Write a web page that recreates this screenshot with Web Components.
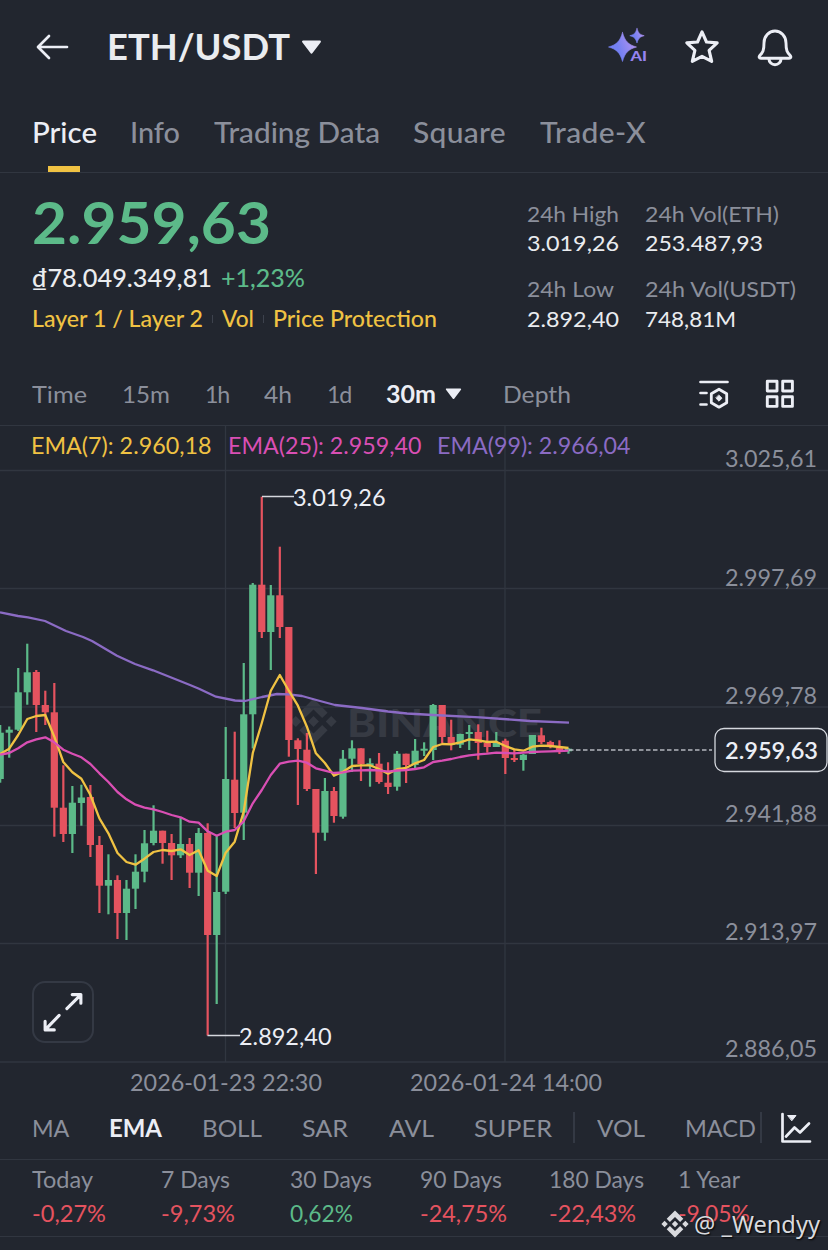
<!DOCTYPE html>
<html lang="en">
<head>
<meta charset="utf-8">
<title>ETH/USDT</title>
<style>
    html {
        background: #22262f;
    }

    body {
        margin: 0;
        width: 828px;
        height: 1250px;
        overflow: hidden;
        font-family: Lato, "Open Sans", sans-serif;
        color: #eaecef;
        --bg: #22262f;
        --line: #313640;
        --muted: #8b8f9b;
        --white: #eceef5;
        --up: #5cba89;
        --down: #e5535f;
        --gold: #f0c243;
        --pink: #d94fb4;
        --purple: #8b6bc4;
    }
</style>
</head>
<body>
<market-page></market-page>

<script>
    // base class: clones the given markup in an open shadow root
    class UiElement extends HTMLElement {
        constructor() {
            super();
            this.attachShadow({ mode: 'open' });
            this.shadowRoot.innerHTML = this.constructor.markup;
        }
    }

    // one line of text, widened and spaced to fill its width
    customElements.define('fit-text', class extends UiElement {
        static get markup() {
            return `
                <style>
                    :host { display: inline-block; white-space: nowrap; flex: none; }
                    span { display: inline-block; transform-origin: 0 50%; }
                </style>
                <span><slot></slot></span>`;
        }
        connectedCallback() {
            const width = Number(this.getAttribute('w'));
            const span = this.shadowRoot.querySelector('span');
            const length = this.textContent.length;
            if (!width || !length) {
                return;
            }
            this.style.width = width + 'px';
            const natural = span.getBoundingClientRect().width;
            const scale = Math.max(0.97, Math.min(1.07, width / natural));
            const spacing = (width / scale - natural) / length;
            span.style.letterSpacing = spacing.toFixed(3) + 'px';
            span.style.transform = `scaleX(${scale.toFixed(4)})`;
        }
    });

    const ICONS = {
        back: [34, 28, '<path d="M14 3 3 14l11 11M3.500 14H32" stroke-width="2.700"/>'],
        caret: [20, 14, '<path d="M2 1.500h16L10 12Z" fill="currentColor" stroke-width="2"/>'],
        ai: [44, 40, `
            <defs>
                <linearGradient id="g" x1="0" y1=".7" x2="1" y2=".3">
                    <stop offset=".35" stop-color="#7480f2"/><stop offset="1" stop-color="#b795f0"/>
                </linearGradient>
            </defs>
            <path d="M15.500 5.500c2.500 8.700 5.500 12 14 14.500-8.500 2.500-11.500 5.800-14 14.500C13 25.800 10 22.500 1.500 20 10 17.500 13 14.200 15.500 5.500Z" fill="url(#g)" stroke="url(#g)" stroke-width=".6"/>
            <path d="M30 1.500c1.400 4.700 2.800 6 7.200 7.200-4.400 1.200-5.800 2.600-7.200 7.300-1.400-4.700-2.800-6.100-7.200-7.300 4.400-1.200 5.800-2.500 7.200-7.200Z" fill="url(#g)" stroke="url(#g)" stroke-width=".6"/>
            <text x="23.500" y="34" font-size="14" font-weight="900" textLength="16.500" lengthAdjust="spacingAndGlyphs" fill="#9683ef" stroke="#22262f" stroke-width="2.500" paint-order="stroke">AI</text>
            <text x="23.500" y="34" font-size="14" font-weight="900" textLength="16.500" lengthAdjust="spacingAndGlyphs" fill="none" stroke="#9683ef" stroke-width=".5" aria-hidden="true"></text>`],
        star: [38, 38, '<path d="m19 3.800 4.500 10.200 10.700.9-8.100 7.500 2.600 11-9.700-5-9.700 5 2.600-11-8.100-7.500 10.700-.9Z" stroke-width="3.100"/>'],
        bell: [38, 40, '<path d="M8 16a11 12 0 0 1 22 0c0 7.800 1.200 9.500 4.200 12.500 1.200 1.400.6 2.700-1 2.700H4.800c-1.600 0-2.200-1.300-1-2.700C6.800 25.500 8 23.800 8 16Z" stroke-width="2.900"/><path d="M13 32a6 5.700 0 0 0 12 0" stroke-width="3"/>'],
        settings: [32, 32, '<path d="M2.500 4h27M2.500 15h6M2.500 26.500h6" stroke-width="2.700"/><path d="m21 11.200 7.700 4.500v9L21 29.200l-7.700-4.500v-9Z" stroke-width="2.800"/><path d="m21 17.200 3 3-3 3-3-3Z" fill="currentColor" stroke-width=".9"/>'],
        grid: [32, 32, '<path d="M3.300 3.300h9.700v9.700H3.300ZM18.700 3.300h9.700v9.700h-9.700ZM3.300 18.700h9.700v9.700H3.300ZM18.700 18.700h9.700v9.700h-9.700Z" stroke-width="2.900"/>'],
        plot: [32, 32, '<path d="M2.500 2v27.500H30M6 24.500l8.500-9 5.500 5 9-9" stroke-width="2.700"/><path d="M8 3.500h8l-4 5Z" fill="currentColor" stroke-width="1"/>'],
        expand: [60, 60, '<path d="M34 26.500 48 12.500M39.500 12H48.500V21M26 33.500 12 48M11.500 39.500V48.500H21" stroke-width="3.200"/>'],
        diamond: [30, 30, '<g fill="currentColor" stroke="none"><path d="m15 1.500 8.300 8.300-3.200 3.200L15 7.900 9.900 13 6.700 9.800Z"/><path d="m15 28.500 8.300-8.300-3.200-3.200-5.100 5.100L9.900 17l-3.200 3.200Z"/><path d="m15 11.800 3.200 3.200-3.200 3.200-3.200-3.200Z"/><path d="m4.600 11.800 3.200 3.200-3.200 3.200L1.400 15ZM25.400 11.800l3.200 3.200-3.200 3.200-3.200-3.200Z"/></g>']
    };

    customElements.define('ui-icon', class extends UiElement {
        static get markup() {
            return `
                <style>
                    :host { display: inline-block; flex: none; color: var(--white); }
                    svg { display: block; }
                </style>
                <div></div>`;
        }
        connectedCallback() {
            const [w, h, body] = ICONS[this.getAttribute('name')];
            const width = this.getAttribute('width') || w;
            this.shadowRoot.querySelector('div').innerHTML =
                `<svg width="${width}" height="${width * h / w}" viewBox="0 0 ${w} ${h}" fill="none" stroke="currentColor"
                    stroke-linecap="round" stroke-linejoin="round">${body}</svg>`;
        }
    });

    customElements.define('pair-header', class extends UiElement {
        static get markup() {
            return `
                <style>
                    :host { display: flex; align-items: center; height: 94px; box-sizing: border-box; padding: 0 34px 0 35px; }
                    fit-text { margin: -3px 0 0 38px; font-size: 36px; font-weight: 700; line-height: 44px; }
                    .caret { margin-left: 11px; }
                    .actions { display: flex; align-items: center; margin-left: auto; gap: 35px; }
                    .actions ui-icon:first-child { margin-right: -3px; }
                </style>
                <ui-icon name="back"></ui-icon>
                <fit-text w="183"></fit-text>
                <ui-icon class="caret" name="caret" width="21"></ui-icon>
                <div class="actions">
                    <ui-icon name="ai"></ui-icon>
                    <ui-icon name="star"></ui-icon>
                    <ui-icon name="bell"></ui-icon>
                </div>`;
        }
        connectedCallback() {
            const label = this.shadowRoot.querySelector('fit-text');
            label.textContent = this.textContent;
            label.connectedCallback();
        }
    });

    customElements.define('page-tabs', class extends UiElement {
        static get markup() {
            return `
                <style>
                    :host { display: flex; gap: 33.5px; height: 79px; box-sizing: border-box; padding-left: 31.5px; border-bottom: 1px solid var(--line); }
                    ::slotted(*) { font-size: 28px; line-height: 77px; color: var(--muted); font-weight: 500; }
                    ::slotted([active]) {
                        color: var(--white);
                        background: linear-gradient(var(--gold), var(--gold)) 50% 100% / 32px 6px no-repeat;
                    }
                </style>
                <slot></slot>`;
        }
    });

    customElements.define('pair-summary', class extends UiElement {
        static get markup() {
            return `
                <style>
                    :host { display: flex; justify-content: space-between; height: 190px; box-sizing: border-box; padding: 19px 32px 0 32px; }
                    .price { display: block; font-size: 57px; font-weight: 700; line-height: 60px; color: var(--up); }
                    .fiat { display: flex; gap: 9px; margin-top: 10px; font-size: 24px; font-weight: 500; line-height: 32px; }
                    .up { color: var(--up); }
                    .tags { display: flex; align-items: center; gap: 9px; margin-top: 9px; font-size: 22.5px; font-weight: 500; line-height: 32px; color: var(--gold); }
                    i { width: 1px; height: 8px; background: #3d424d; }
                    .stats { display: grid; grid-template-columns: 93px 151px; column-gap: 25px; grid-auto-rows: 29px; margin-top: 7px; font-size: 22px; line-height: 29px; align-content: start; }
                    .label { color: var(--muted); }
                    .second { margin-top: 17px; margin-bottom: -17px; }
                    .last { margin-top: 18px; }
                </style>
                <div>
                    <fit-text class="price" w="239">2.959,63</fit-text>
                    <div class="fiat"><fit-text w="180">₫78.049.349,81</fit-text><fit-text class="up" w="84">+1,23%</fit-text></div>
                    <div class="tags">
                        <fit-text w="171">Layer 1 / Layer 2</fit-text><i></i>
                        <fit-text w="32">Vol</fit-text><i></i>
                        <fit-text w="164">Price Protection</fit-text>
                    </div>
                </div>
                <div class="stats">
                    <fit-text class="label" w="92">24h High</fit-text><fit-text class="label" w="134">24h Vol(ETH)</fit-text>
                    <fit-text w="92">3.019,26</fit-text><fit-text w="118">253.487,93</fit-text>
                    <fit-text class="label second" w="87">24h Low</fit-text><fit-text class="label second" w="151">24h Vol(USDT)</fit-text>
                    <fit-text class="last" w="92">2.892,40</fit-text><fit-text class="last" w="91">748,81M</fit-text>
                </div>`;
        }
    });

    customElements.define('interval-bar', class extends UiElement {
        static get markup() {
            return `
                <style>
                    :host {
                        display: flex; align-items: center; gap: 35px; height: 63px; box-sizing: border-box;
                        padding: 0 32px 0 32px; border-bottom: 1px solid var(--line);
                        font-size: 24px; line-height: 62px; color: var(--muted);
                    }
                    .active { display: flex; align-items: center; gap: 9px; color: var(--white); font-weight: 700; }
                    .depth { margin-left: 6px; }
                    .tools { display: flex; gap: 34px; margin-left: auto; }
                </style>
                <fit-text w="55">Time</fit-text>
                <fit-text w="48">15m</fit-text>
                <fit-text w="24">1h</fit-text>
                <fit-text w="28">4h</fit-text>
                <fit-text w="24">1d</fit-text>
                <div class="active"><fit-text w="50">30m</fit-text><ui-icon name="caret" width="17"></ui-icon></div>
                <fit-text class="depth" w="68">Depth</fit-text>
                <div class="tools"><ui-icon name="settings"></ui-icon><ui-icon name="grid"></ui-icon></div>`;
        }
    });

    // high, body top, body bottom, low, direction
    const CANDLES = [
        [725, 732.7, 779, 782.7, 1], [726.5, 729.7, 732.7, 757.7, 1], [668, 692.3, 729.7, 731, 1],
        [643.7, 672.3, 692.3, 704.7, 1], [670, 672, 705, 732, 0], [690.7, 705, 712.3, 725, 0],
        [683, 712.3, 807.7, 836.7, 0], [765.3, 807.7, 834, 842, 0], [786, 802.7, 834, 853, 1],
        [784.7, 797.5, 803, 825.7, 1], [785, 797, 845, 857, 0], [836, 845, 885.7, 913, 0],
        [854.3, 880, 885.7, 914.3, 1], [875.3, 880, 913, 939, 0], [880, 888.7, 913, 940, 1],
        [854.3, 871.7, 888.7, 909, 1], [830, 843.3, 871.7, 882.3, 1], [805.3, 830.7, 843, 845.3, 1],
        [830.7, 830.7, 843, 863.7, 0], [834, 843, 855.3, 880, 0], [817.3, 844, 855.3, 858, 1],
        [838, 844, 872.7, 888, 0], [828, 833, 872.7, 896, 1], [823.3, 833, 935, 1035.5, 0],
        [836, 892, 935, 1004, 1], [727, 779, 891.7, 894, 1], [731.7, 779.7, 813, 828, 0],
        [663, 714.3, 812.7, 840, 1], [583, 584.7, 714.3, 748.5, 1], [496.7, 584.7, 632, 638, 0],
        [585, 595.3, 632, 670, 1], [546.7, 595.3, 627, 638, 0], [627, 627, 740, 756.7, 0],
        [738.3, 740.3, 749, 805, 0], [733, 749.7, 789, 791, 0], [789, 789, 832.7, 874, 0],
        [778, 791, 832.7, 840.7, 1], [787, 791, 816, 822.7, 0], [750, 758.7, 816.7, 818.7, 1],
        [740.3, 748.3, 758.7, 772, 1], [748.3, 748.3, 764, 781, 0], [758.3, 763.3, 766, 786.7, 1],
        [753, 763.7, 782, 783.7, 0], [762.3, 782.7, 787, 794, 0], [751, 753.7, 786.7, 790.7, 1],
        [753.7, 753.7, 765, 783, 0], [739, 750.7, 765, 770, 1], [742.3, 748.7, 750.7, 756, 1],
        [704, 705, 750, 760, 1], [705, 705, 737, 743, 0], [719.7, 737, 744.7, 750.3, 0],
        [733.7, 734, 744.7, 748, 1], [725, 732, 734, 750, 1], [724.3, 732, 743, 759.7, 0],
        [730.7, 743, 747, 752.7, 0], [732, 742, 747, 747, 1], [738.7, 740.7, 758, 774, 0],
        [748.7, 758, 760, 762, 0], [754, 754.7, 760, 770.7, 1], [735, 735, 754, 754, 1],
        [727.7, 735.3, 742, 744, 0], [740.7, 742, 747, 748.3, 0], [740.3, 747.7, 752, 754, 0],
        [748, 748.7, 751.3, 753.7, 1]
    ];
    const EMA7 = [754, 748.7, 735, 719, 716, 715, 736.7, 762, 772.3, 778.7, 795, 818.3, 833.3, 853, 862, 864.7,
        858.7, 852, 850, 851, 849.3, 855, 850.3, 870.7, 876, 852.7, 841.7, 811.7, 753, 723, 690.7, 675,
        690.7, 705.7, 726.7, 753.3, 763, 775.7, 771.7, 766, 765.3, 765.3, 769, 773.7, 769.2, 768, 763.3, 760,
        747, 744, 744.3, 742.3, 739.3, 740.3, 742, 741.7, 746, 749.3, 750.7, 746.7, 745.7, 746, 747, 748];
    const EMA25 = [754.7, 753, 748.3, 742.3, 739.3, 737.3, 742.3, 749.7, 753.7, 757.3, 764, 773.3, 782, 792, 799.3, 804.7,
        807.7, 809.3, 812, 815, 817.3, 821.7, 822.7, 831.3, 835.7, 831.7, 830, 821.3, 803.3, 790, 775, 763.7,
        761.7, 760.7, 762.7, 768.3, 770.7, 773, 772.3, 770.7, 770.3, 770, 770.3, 771.7, 770.5, 770, 769, 767.3,
        762, 760.7, 759, 757, 755.3, 754.3, 753.7, 752.7, 753, 753.3, 752.7, 752, 751.7, 751.3, 751, 750.7];
    const EMA99 = '0,612.3 18,616 28,617.3 45,621 66,631 83,637 92,641 117,655.7 135,664 153,670.3 180,681 190,685 199,688.7 216,696.7 235,700.5 245,701 262,697 277,694 289,694.3 302,696 320,701 335,705 362,708 388,711.5 407,713.5 433,715 480,717.3 530,721 569,722.7';

    const candleX = i => 0.2 + 9.02 * i;

    customElements.define('candle-chart', class extends UiElement {
        static get markup() {
            return `
                <style>
                    :host { display: block; position: relative; height: 670px; }
                    svg { display: block; font-size: 22.5px; }
                    .grid { stroke: var(--line); stroke-width: 1.3; }
                    .scale { fill: var(--muted); }
                    .up { fill: var(--up); }
                    .down { fill: var(--down); }
                    polyline { fill: none; stroke-width: 2.3; stroke-linejoin: round; }
                    .mark { fill: var(--white); }
                    .brand { fill: #363a43; }
                    .expand {
                        position: absolute; left: 32px; top: 555px; width: 62px; height: 62px; box-sizing: border-box;
                        border: 2px solid #343944; border-radius: 13px; background: var(--bg);
                    }
                    .brand-icon { position: absolute; left: 288px; top: 270px; color: #363a43; }
                    svg, .expand { position: relative; }
                    .expand { position: absolute; }
                </style>
                <ui-icon class="brand-icon" name="diamond" width="51"></ui-icon>
                <svg width="828" height="670" viewBox="0 426 828 670"></svg>
                <div class="expand"><ui-icon name="expand" width="58"></ui-icon></div>`;
        }
        connectedCallback() {
            const label = (x, y, w, text, attrs) =>
                `<text x="${x}" y="${y}" textLength="${w}" lengthAdjust="spacingAndGlyphs" ${attrs}>${text}</text>`;
            const line = values => values.map((y, i) => `${candleX(i).toFixed(1)},${y}`).join(' ');

            const rows = [470.5, 588.5, 707, 825.5, 943.5, 1062]
                .map(y => `<path class="grid" d="M0 ${y}H828"/>`).join('');
            const scale = [[466.5, '3.025,61'], [585.5, '2.997,69'], [703.5, '2.969,78'], [822, '2.941,88'], [940, '2.913,97'], [1057, '2.886,05']]
                .map(([y, t]) => label(725, y, 92, t, 'class="scale"')).join('');
            const candles = CANDLES.map(([high, top, bottom, low, up], i) => {
                const x = candleX(i);
                return `<g class="${up ? 'up' : 'down'}">
                    <rect x="${x - 1.1}" y="${high}" width="2.2" height="${low - high}"/>
                    <rect x="${x - 3.6}" y="${top}" width="7.2" height="${bottom - top}"/></g>`;
            }).join('');

            this.shadowRoot.querySelector('svg').innerHTML = `
                ${rows}
                <path class="grid" d="M225.500 426V1062M505 426V1062"/>
                ${label(347, 736.5, 195, 'BINANCE', 'class="brand" font-size="38" font-weight="900"')}
                ${candles}
                <polyline points="${EMA99}" stroke="var(--purple)"/>
                <polyline points="${line(EMA7)}" stroke="var(--gold)"/>
                <polyline points="${line(EMA25)}" stroke="var(--pink)"/>
                <path d="M262 496.500H294M207.500 1035.500H240" stroke="#d5d8de" stroke-width="1.300"/>
                ${label(293, 505.5, 92.5, '3.019,26', 'class="mark"')}
                ${label(239, 1044.5, 92.5, '2.892,40', 'class="mark"')}
                ${label(31, 453.5, 180.5, 'EMA(7): 2.960,18', 'fill="var(--gold)"')}
                ${label(228, 453.5, 193.5, 'EMA(25): 2.959,40', 'fill="var(--pink)"')}
                ${label(437, 453.5, 193.5, 'EMA(99): 2.966,04', 'fill="var(--purple)"')}
                ${scale}
                <path d="M569 750H712" stroke="#b4b7bf" stroke-width="1.400" stroke-dasharray="4.500 2.500"/>
                <rect x="715" y="728.500" width="112" height="43" rx="9" fill="var(--bg)" stroke="#d5d8de" stroke-width="1.300"/>
                ${label(725, 759, 93, '2.959,63', 'class="mark" font-weight="600"')}
                ${label(130, 1090.5, 192, '2026-01-23 22:30', 'class="scale"')}
                ${label(410, 1090.5, 192, '2026-01-24 14:00', 'class="scale"')}`;
        }
    });

    customElements.define('indicator-bar', class extends UiElement {
        static get markup() {
            return `
                <style>
                    :host {
                        display: flex; align-items: center; gap: 40.3px; height: 64px; box-sizing: border-box;
                        padding-left: 31.5px; border-bottom: 1px solid var(--line);
                        font-size: 24px; line-height: 61px; color: var(--muted);
                    }
                    .active { color: var(--white); font-weight: 700; }
                    i { width: 2px; height: 31px; background: #343944; margin: 0 -19px 0 -19px; }
                    i.end { margin: 0 -22px 0 -36.5px; }
                </style>
                <fit-text w="37">MA</fit-text>
                <fit-text class="active" w="53">EMA</fit-text>
                <fit-text w="60">BOLL</fit-text>
                <fit-text w="46">SAR</fit-text>
                <fit-text w="45">AVL</fit-text>
                <fit-text w="78">SUPER</fit-text>
                <i></i>
                <fit-text w="48">VOL</fit-text>
                <fit-text w="71">MACD</fit-text>
                <i class="end"></i>
                <ui-icon name="plot"></ui-icon>`;
        }
    });

    customElements.define('period-cell', class extends UiElement {
        static get markup() {
            return `
                <style>
                    :host { display: flex; flex-direction: column; font-size: 22.5px; line-height: 34px; color: var(--down); }
                    :host([up]) { color: var(--up); }
                </style>
                <slot name="label"></slot>
                <slot></slot>`;
        }
    });

    customElements.define('period-row', class extends UiElement {
        static get markup() {
            return `
                <style>
                    :host {
                        display: grid; grid-template-columns: repeat(6, 129.4px); height: 77px; box-sizing: border-box;
                        padding: 3px 0 0 31.5px; border-bottom: 1px solid var(--line);
                    }
                    [slot=label] { color: var(--muted); }
                </style>
                <period-cell><fit-text slot="label" w="61">Today</fit-text><fit-text w="74">-0,27%</fit-text></period-cell>
                <period-cell><fit-text slot="label" w="69">7 Days</fit-text><fit-text w="74">-9,73%</fit-text></period-cell>
                <period-cell up><fit-text slot="label" w="82">30 Days</fit-text><fit-text w="63">0,62%</fit-text></period-cell>
                <period-cell><fit-text slot="label" w="82">90 Days</fit-text><fit-text w="87">-24,75%</fit-text></period-cell>
                <period-cell><fit-text slot="label" w="95">180 Days</fit-text><fit-text w="87">-22,43%</fit-text></period-cell>
                <period-cell><fit-text slot="label" w="62">1 Year</fit-text><fit-text w="72">-9,05%</fit-text></period-cell>`;
        }
    });

    // author credit laid over the lower right corner
    customElements.define('author-stamp', class extends UiElement {
        static get markup() {
            return `
                <style>
                    :host {
                        position: absolute; left: 660px; top: 1208px; display: flex; align-items: center; gap: 4px;
                        font: 24px/32px "Noto Sans", sans-serif; color: #d9dade; --white: #d9dade;
                        text-shadow: 1px 1px 2px #000;
                    }
                </style>
                <ui-icon name="diamond"></ui-icon>
                <fit-text w="126"></fit-text>`;
        }
        connectedCallback() {
            const label = this.shadowRoot.querySelector('fit-text');
            label.textContent = this.textContent;
            label.connectedCallback();
        }
    });

    customElements.define('market-page', class extends UiElement {
        static get markup() {
            return `
                <style>
                    :host { display: block; position: relative; width: 828px; height: 1250px; background: var(--bg); overflow: hidden; }
                </style>
                <pair-header>ETH/USDT</pair-header>
                <page-tabs>
                    <fit-text active w="65">Price</fit-text>
                    <fit-text w="50">Info</fit-text>
                    <fit-text w="166">Trading Data</fit-text>
                    <fit-text w="93">Square</fit-text>
                    <fit-text w="106">Trade-X</fit-text>
                </page-tabs>
                <pair-summary></pair-summary>
                <interval-bar></interval-bar>
                <candle-chart></candle-chart>
                <indicator-bar></indicator-bar>
                <period-row></period-row>
                <author-stamp>@ _Wendyy</author-stamp>`;
        }
    });
</script>
</body>
</html>
